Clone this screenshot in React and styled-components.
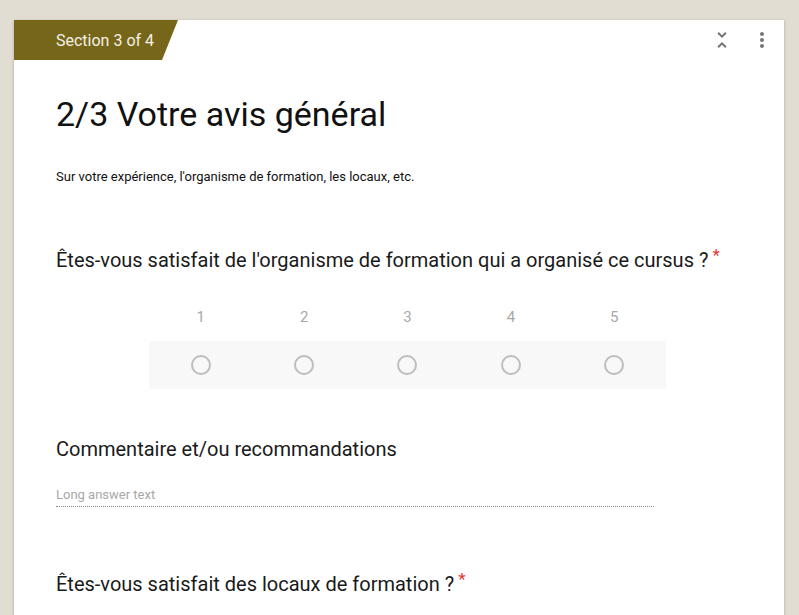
import React from 'react'
import styled, { createGlobalStyle } from 'styled-components'

const GlobalStyle = createGlobalStyle`
  html, body {
    margin: 0;
    padding: 0;
    background: #e2ddd2;
    font-family: Roboto, "Liberation Sans", Arial, sans-serif;
  }
`

const Page = styled.div`
  padding: 20px 15px 0 14px;
  height: 615px;
  overflow: hidden;
  box-sizing: border-box;
`

const Card = styled.div`
  background: #fff;
  width: 770px;
  min-height: 700px;
  box-shadow: 0 1px 3px rgba(0, 0, 0, 0.25);
`

const Header = styled.div`
  display: flex;
  align-items: center;
  height: 40px;
  padding-right: 10px;
`

const SectionTab = styled.div`
  height: 40px;
  width: 164px;
  box-sizing: border-box;
  padding-left: 42px;
  display: flex;
  align-items: center;
  background: #756619;
  color: #f4f1e6;
  font-size: 16px;
  clip-path: polygon(0 0, 100% 0, 148px 100%, 0 100%);
`

const Tools = styled.div`
  margin-left: auto;
  display: flex;
  gap: 16px;
`

const IconButton = styled.svg`
  width: 24px;
  height: 24px;
  fill: #757575;
  display: block;
`

const Body = styled.div`
  padding: 0 25px 0 42px;
`

const Title = styled.h1`
  margin: 34px 0 0;
  font-size: 34px;
  line-height: 40px;
  font-weight: 400;
  color: #111;
`

const Description = styled.p`
  margin: 33px 0 0;
  font-size: 13px;
  line-height: 20px;
  color: #111;
`

const Question = styled.div`
  margin-top: ${p => p.$gap}px;
  font-size: 20px;
  line-height: 24px;
  color: #1a1a1a;
`

const Required = styled.span`
  color: #e53935;
  font-size: 17px;
  margin-left: 4px;
  vertical-align: 6px;
`

const Scale = styled.div`
  margin: 33px 0 0 93px;
  width: 517px;
`

const ScaleRow = styled.div`
  display: grid;
  grid-template-columns: repeat(5, 1fr);
  justify-items: center;
  align-items: center;
  height: ${p => p.$height}px;
  margin-top: ${p => p.$gap || 0}px;
  background: ${p => p.$shaded ? '#f8f8f8' : 'transparent'};
`

const ScaleLabel = styled.span`
  font-size: 15px;
  color: #a8a8a8;
`

const Radio = styled.span`
  width: 16px;
  height: 16px;
  border: 2px solid #bdbdbd;
  border-radius: 50%;
`

const Field = styled.div`
  margin-top: 26px;
  width: 598px;
  font-size: 13px;
  line-height: 16px;
  color: #a8a8a8;
  padding-bottom: 3px;
  border-bottom: 1px dotted #8a8a8a;
`

const values = [1, 2, 3, 4, 5]

export default function App () {
  return (
    <>
      <GlobalStyle />
      <Page>
        <Card>
          <Header>
            <SectionTab>Section 3 of 4</SectionTab>
            <Tools>
              <IconButton viewBox='0 0 24 24'>
                <path d='M7.41 18.59L8.83 20 12 16.83 15.17 20l1.41-1.41L12 14l-4.59 4.59zm9.18-13.18L15.17 4 12 7.17 8.83 4 7.41 5.41 12 10l4.59-4.59z' />
              </IconButton>
              <IconButton viewBox='0 0 24 24'>
                <path d='M12 8c1.1 0 2-.9 2-2s-.9-2-2-2-2 .9-2 2 .9 2 2 2zm0 2c-1.1 0-2 .9-2 2s.9 2 2 2 2-.9 2-2-.9-2-2-2zm0 6c-1.1 0-2 .9-2 2s.9 2 2 2 2-.9 2-2-.9-2-2-2z' />
              </IconButton>
            </Tools>
          </Header>
          <Body>
            <Title>2/3 Votre avis général</Title>
            <Description>Sur votre expérience, l'organisme de formation, les locaux, etc.</Description>

            <Question $gap={56}>
              Êtes-vous satisfait de l'organisme de formation qui a organisé ce cursus ?<Required>*</Required>
            </Question>
            <Scale>
              <ScaleRow $height={24}>
                {values.map(v => <ScaleLabel key={v}>{v}</ScaleLabel>)}
              </ScaleRow>
              <ScaleRow $height={48} $gap={12} $shaded>
                {values.map(v => <Radio key={v} />)}
              </ScaleRow>
            </Scale>

            <Question $gap={48}>Commentaire et/ou recommandations</Question>
            <Field>Long answer text</Field>

            <Question $gap={60}>
              Êtes-vous satisfait des locaux de formation ?<Required>*</Required>
            </Question>
          </Body>
        </Card>
      </Page>
    </>
  )
}
